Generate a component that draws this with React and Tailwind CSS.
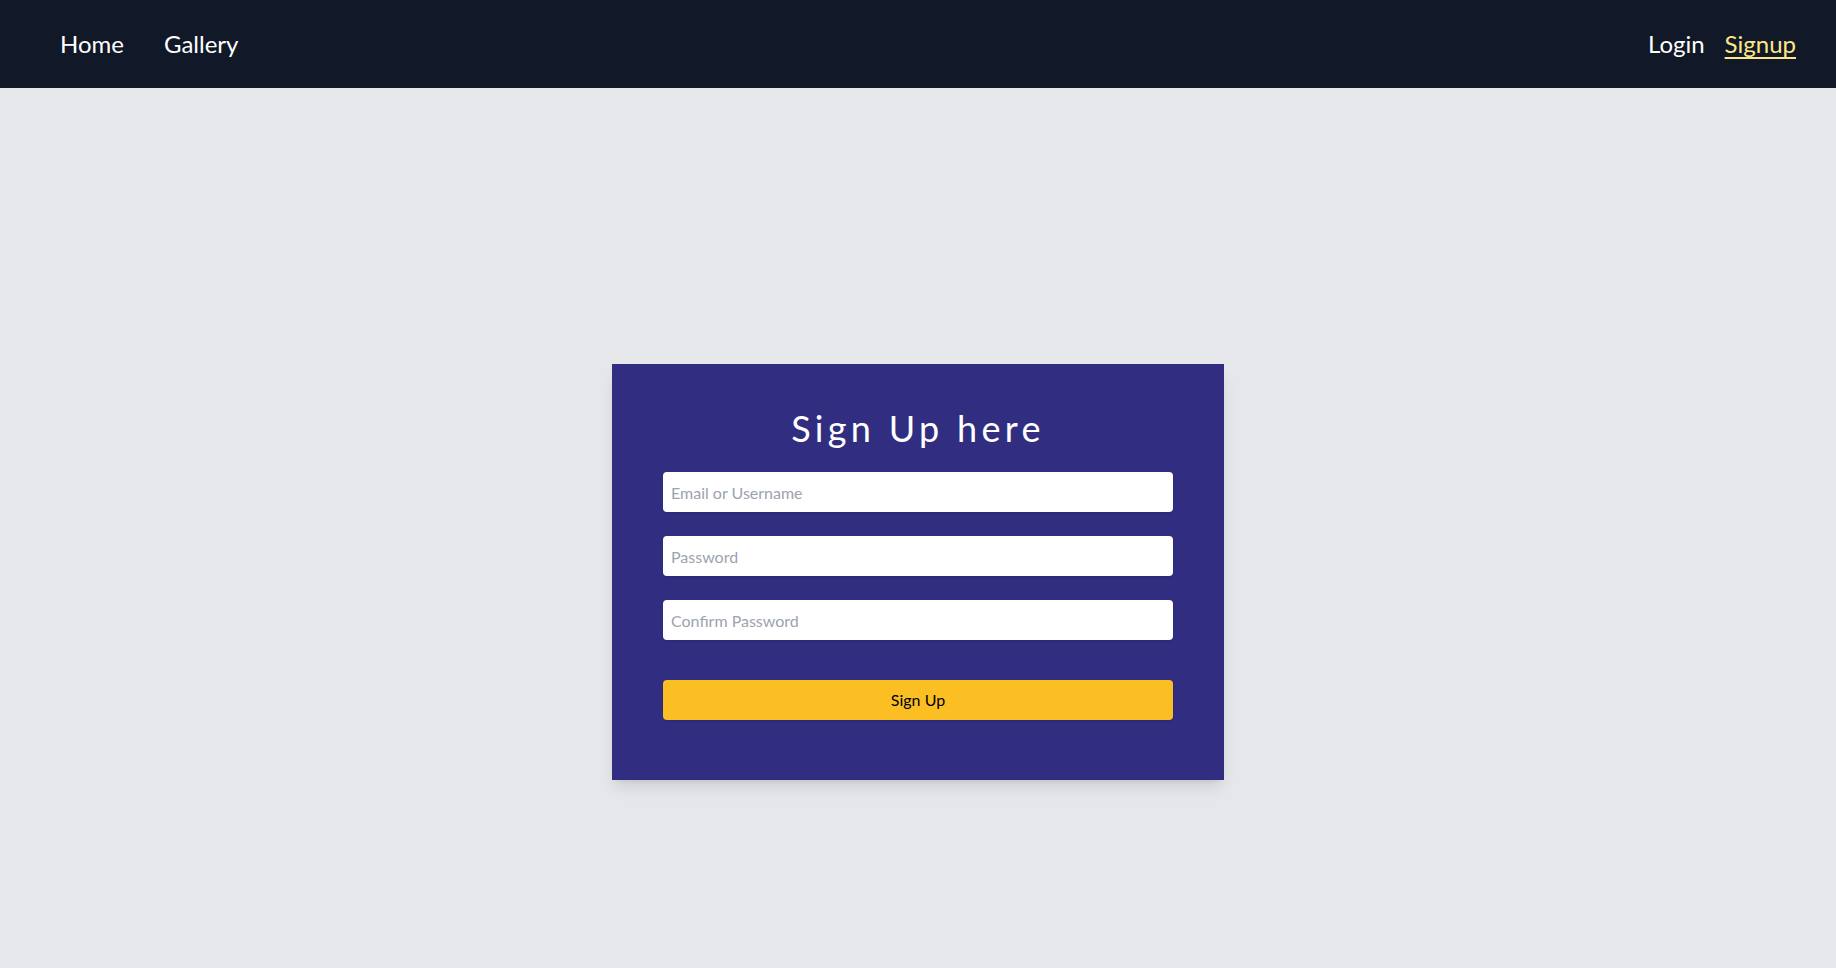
export default function App() {
  return (
    <div className="h-screen overflow-hidden flex flex-col bg-[#e5e7eb] font-['Lato',_sans-serif]">
      <nav className="h-[88px] shrink-0 bg-[#111827] flex items-center justify-between px-10 text-white text-2xl">
        <div className="flex items-center">
          <a href="#" className="px-5">Home</a>
          <a href="#" className="px-5">Gallery</a>
        </div>
        <div className="flex items-center gap-[20px]">
          <a href="#">Login</a>
          <a href="#" className="text-[#fde68a] underline underline-offset-4">Signup</a>
        </div>
      </nav>
      <main className="flex-1 flex justify-center items-start pt-[276px]">
        <div className="w-1/3 h-[416px] bg-[#312e81] shadow-lg flex flex-col items-center pt-[44px]">
          <h1 className="text-4xl text-white tracking-[0.12em] leading-10">Sign Up here</h1>
          <form className="w-5/6 flex flex-col mt-[24px]" onSubmit={(e) => e.preventDefault()}>
            <input
              type="text"
              placeholder="Email or Username"
              className="h-10 rounded bg-white px-2 text-base text-gray-700 placeholder:text-[#9ca3af] shadow outline-none"
            />
            <input
              type="password"
              placeholder="Password"
              className="h-10 rounded bg-white px-2 text-base text-gray-700 placeholder:text-[#9ca3af] shadow outline-none mt-6"
            />
            <input
              type="password"
              placeholder="Confirm Password"
              className="h-10 rounded bg-white px-2 text-base text-gray-700 placeholder:text-[#9ca3af] shadow outline-none mt-6"
            />
            <button
              type="submit"
              className="h-10 rounded bg-[#fbbf24] text-black text-base mt-10 shadow"
            >
              Sign Up
            </button>
          </form>
        </div>
      </main>
    </div>
  );
}
